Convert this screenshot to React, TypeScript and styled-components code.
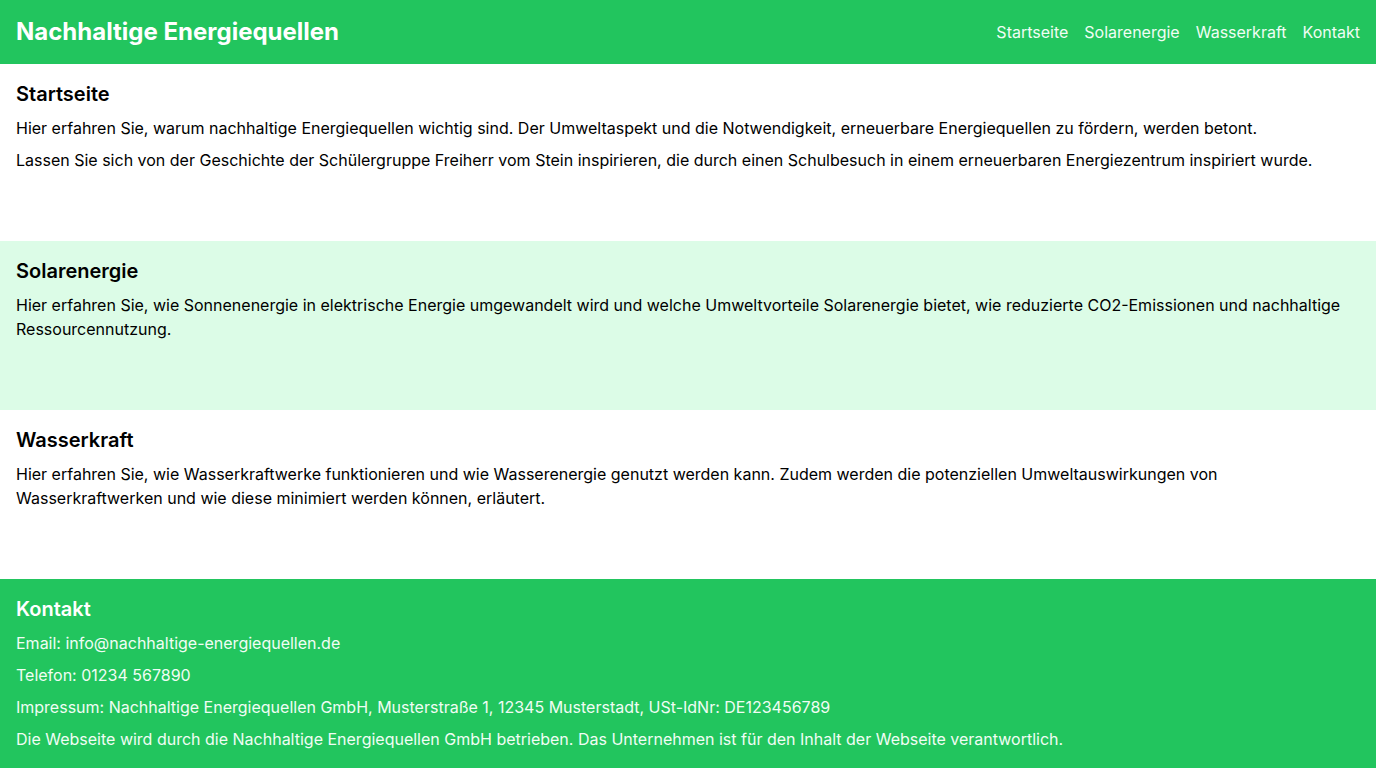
import React from "react";
import styled, { createGlobalStyle } from "styled-components";

const Colors = {
  green: "#22c55e",
  greenLight: "#dcfce7",
  text: "#000000",
  white: "#ffffff",
  offWhite: "#f0fdf4",
};

const GlobalStyle = createGlobalStyle`
  * { box-sizing: border-box; }
  body {
    margin: 0;
    font-family: Inter, "Noto Sans", "Liberation Sans", sans-serif;
    color: ${Colors.text};
    background: ${Colors.white};
  }
  h1, h2, p { margin: 0; }
`;

const Header = styled.header`
  height: 64px;
  background-color: ${Colors.green};
  display: flex;
  align-items: center;
  justify-content: space-between;
  padding: 0 16px;
`;

const Title = styled.h1`
  font-size: 24px;
  line-height: 32px;
  font-weight: 700;
  color: ${Colors.white};
`;

const Nav = styled.nav`
  display: flex;
  gap: 16px;
`;

const NavLink = styled.a`
  font-size: 16px;
  line-height: 24px;
  color: ${Colors.offWhite};
  text-decoration: none;
  cursor: pointer;
`;

const Section = styled.section<{ $tinted?: boolean }>`
  background-color: ${(p) => (p.$tinted ? Colors.greenLight : Colors.white)};
  padding: 16px 16px 61px;
`;

const Heading = styled.h2<{ $light?: boolean }>`
  font-size: 20px;
  line-height: 28px;
  font-weight: 600;
  margin-bottom: 8px;
  color: ${(p) => (p.$light ? Colors.white : Colors.text)};
`;

const Text = styled.p<{ $light?: boolean }>`
  font-size: 16px;
  line-height: 24px;
  margin-bottom: 8px;
  color: ${(p) => (p.$light ? Colors.offWhite : Colors.text)};
`;

const Footer = styled.footer`
  background-color: ${Colors.green};
  padding: 16px;
`;

const navItems = ["Startseite", "Solarenergie", "Wasserkraft", "Kontakt"];

const App = (): JSX.Element => {
  return (
    <>
      <GlobalStyle />
      <Header>
        <Title>Nachhaltige Energiequellen</Title>
        <Nav>
          {navItems.map((item) => (
            <NavLink key={item}>{item}</NavLink>
          ))}
        </Nav>
      </Header>
      <Section>
        <Heading>Startseite</Heading>
        <Text>
          Hier erfahren Sie, warum nachhaltige Energiequellen wichtig sind. Der Umweltaspekt und die
          Notwendigkeit, erneuerbare Energiequellen zu fördern, werden betont.
        </Text>
        <Text>
          Lassen Sie sich von der Geschichte der Schülergruppe Freiherr vom Stein inspirieren, die
          durch einen Schulbesuch in einem erneuerbaren Energiezentrum inspiriert wurde.
        </Text>
      </Section>
      <Section $tinted>
        <Heading>Solarenergie</Heading>
        <Text>
          Hier erfahren Sie, wie Sonnenenergie in elektrische Energie umgewandelt wird und welche
          Umweltvorteile Solarenergie bietet, wie reduzierte CO2-Emissionen und nachhaltige
          Ressourcennutzung.
        </Text>
      </Section>
      <Section>
        <Heading>Wasserkraft</Heading>
        <Text>
          Hier erfahren Sie, wie Wasserkraftwerke funktionieren und wie Wasserenergie genutzt werden
          kann. Zudem werden die potenziellen Umweltauswirkungen von Wasserkraftwerken und wie diese
          minimiert werden können, erläutert.
        </Text>
      </Section>
      <Footer>
        <Heading $light>Kontakt</Heading>
        <Text $light>Email: info@nachhaltige-energiequellen.de</Text>
        <Text $light>Telefon: 01234 567890</Text>
        <Text $light>
          Impressum: Nachhaltige Energiequellen GmbH, Musterstraße 1, 12345 Musterstadt, USt-IdNr:
          DE123456789
        </Text>
        <Text $light>
          Die Webseite wird durch die Nachhaltige Energiequellen GmbH betrieben. Das Unternehmen ist
          für den Inhalt der Webseite verantwortlich.
        </Text>
      </Footer>
    </>
  );
};

export default App;
